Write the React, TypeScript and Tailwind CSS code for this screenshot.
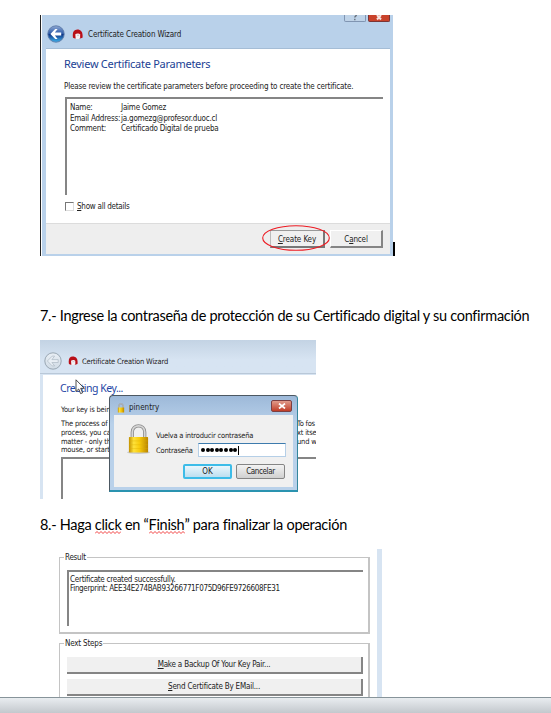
import React from "react";

const ui = "font-['DejaVu_Sans_Condensed','Noto_Sans',sans-serif] whitespace-nowrap text-[#222]";
const body = "font-['Lato','Noto_Sans',sans-serif] whitespace-nowrap text-black";

function RedCap({ className }: { className: string }) {
  return (
    <svg viewBox="0 0 11 10" className={className}>
      <path d="M1 8.800C.1 3.500 1.500.6 5.300.5c4 0 5.800 3 5.200 8.300l-2.500.8H3z" fill="#b90f18" />
      <path d="M3.300 5.300c1.300-1.200 4-1 4.800.200v3.600l-1 .9H3.700z" fill="#f3f1f5" />
      <path d="M5 6.300h2" stroke="#b9a0a8" strokeWidth=".6" />
    </svg>
  );
}

function BackIcon({ active }: { active: boolean }) {
  return (
    <svg viewBox="0 0 18 18" className="h-[18px] w-[18px] shrink-0">
      <defs>
        <linearGradient id="backOn" x1="0" y1="0" x2="0" y2="1">
          <stop offset="0" stopColor="#8fa9d3" />
          <stop offset=".48" stopColor="#2c5aa8" />
          <stop offset=".52" stopColor="#0f3585" />
          <stop offset="1" stopColor="#3fb4ee" />
        </linearGradient>
        <linearGradient id="backOff" x1="0" y1="0" x2="0" y2="1">
          <stop offset="0" stopColor="#e9eff5" />
          <stop offset="1" stopColor="#d0dbe5" />
        </linearGradient>
      </defs>
      <circle cx="9" cy="9" r="8.200" fill={active ? "url(#backOn)" : "url(#backOff)"} stroke={active ? "#5b79a8" : "#929fac"} strokeWidth=".9" />
      <path
        d="M3.400 9l4.800-4.900h2.400L7.900 7.600h6.300v2.900H7.900l2.700 3.400H8.200z"
        fill={active ? "#fff" : "#e9eff5"}
        stroke={active ? "none" : "#a4b0bc"}
        strokeWidth=".6"
      />
    </svg>
  );
}

function Padlock({ className }: { className: string }) {
  return (
    <svg viewBox="0 0 24 32" className={className}>
      <defs>
        <linearGradient id="brass" x1="0" x2="1">
          <stop offset="0" stopColor="#c18f00" />
          <stop offset=".25" stopColor="#ffe23a" />
          <stop offset=".55" stopColor="#f8cb0c" />
          <stop offset="1" stopColor="#b98400" />
        </linearGradient>
      </defs>
      <ellipse cx="12" cy="30" rx="12" ry="1.600" fill="#c9c9c9" />
      <path d="M5.500 15V9c0-9 13-9 13 0v6" fill="none" stroke="#8c8c8c" strokeWidth="3.400" />
      <path d="M5.500 15V9c0-9 13-9 13 0v6" fill="none" stroke="#d6d6d6" strokeWidth="1.700" />
      <rect x="2" y="14" width="20" height="16" rx=".6" fill="url(#brass)" />
      <path d="M2 18h20M2 22h20M2 26h20" stroke="#e0b000" strokeWidth=".4" />
    </svg>
  );
}

function Squiggle({ width }: { width: number }) {
  let d = "M0 2.5";
  for (let x = 2; x <= width; x += 2) d += `L${x} ${x % 4 ? 0.5 : 2.5}`;
  return (
    <svg width={width} height="3" className="absolute left-0 top-[16px]">
      <path d={d} fill="none" stroke="#f03030" strokeWidth=".9" />
    </svg>
  );
}

function ReviewWindow() {
  return (
    <section className={`${ui} relative ml-10 flex h-[241px] w-[353px] border-l border-[#222] pl-px text-[8px] leading-[11px]`}>
      <div className="flex w-full flex-col bg-[#b9d1ea] pb-[2px] pl-[4px] pr-[3px]">
        <header className="flex h-[33px] justify-between">
          <div className="flex items-center pl-px pt-[4px]">
            <BackIcon active />
            <RedCap className="ml-[7px] h-[10px] w-[11px]" />
            <span className="ml-[5px] mt-[2px] tracking-[-0.14px]">Certificate Creation Wizard</span>
          </div>
          <div className="flex gap-[2px]">
            <span className="flex h-[7px] w-[22px] justify-center rounded-b-[2px] border border-t-0 border-[#8095b2] bg-[#bfd3e8]">
              <svg viewBox="0 0 6 6" className="h-[6px] w-[6px]"><path d="M4.300 0c0 1.300-1.500 1-1.500 2.500M2.800 3.800v1.400" fill="none" stroke="#66707c" strokeWidth="1.400" /></svg>
            </span>
            <span className="flex h-[7px] w-[22px] justify-center rounded-b-[2px] border border-t-0 border-[#7b3434] bg-[#c9422b]">
              <svg viewBox="0 0 10 6" className="h-[6px] w-[10px]"><path d="M3 0l4 4.500M7 0L3 4.500" fill="none" stroke="#f4e4e2" strokeWidth="2" /></svg>
            </span>
          </div>
        </header>
        <div className="flex h-[175px] flex-col border-t border-[#a5bdd6] bg-white pl-[18px] pr-[7px]">
          <h2 className="mt-[6px] font-['Noto_Sans',sans-serif] text-[11px] leading-[18px] tracking-[-0.27px] text-[#1c3f94]">Review Certificate Parameters</h2>
          <p className="mt-[8px] tracking-[-0.17px]">Please review the certificate parameters before proceeding to create the certificate.</p>
          <div className="ml-px mt-[5px] grid h-[98px] w-[318px] grid-cols-[51px_1fr] content-start border-l-2 border-t-2 border-[#858585] pl-[3px] pt-[4px] leading-[10.5px] tracking-[-0.22px]">
            <span>Name:</span><span>Jaime Gomez</span>
            <span>Email Address:</span><span>ja.gomezg@profesor.duoc.cl</span>
            <span>Comment:</span><span>Certificado Digital de prueba</span>
          </div>
          <label className="mt-[6px] flex items-center pl-px">
            <span className="h-[9px] w-[9px] border border-b-[#ddd] border-l-[#777] border-r-[#ddd] border-t-[#777] bg-white" />
            <span className="ml-[3px] tracking-[-0.25px]"><u>S</u>how all details</span>
          </label>
        </div>
        <footer className="flex flex-1 items-start justify-end gap-[5px] border-t border-[#dcdcdc] bg-[#eee] pr-[7px] pt-[6px]">
          <div className="relative">
            <button className="block h-[18px] w-[55px] border border-b-2 border-r-2 border-[#777] border-l-[#bbb] border-t-[#999] bg-[#f0f0f0] pt-px leading-[15px] tracking-[-0.1px]"><u>C</u>reate Key</button>
            <svg viewBox="0 0 68 26" className="absolute left-[-8px] top-[-5px] h-[26px] w-[68px] max-w-none">
              <ellipse cx="34" cy="13" rx="33.300" ry="12.300" fill="none" stroke="#ed1c24" strokeWidth="1.100" />
            </svg>
          </div>
          <button className="block h-[18px] w-[53px] border border-b-2 border-r-2 border-[#858585] border-l-white border-t-white bg-[#f0f0f0] pt-px leading-[15px] tracking-[-0.15px]">C<u>a</u>ncel</button>
        </footer>
      </div>
      <span className="absolute left-[352px] top-[227px] h-[14px] w-[2px] bg-black" />
    </section>
  );
}

function Pinentry() {
  return (
    <div className="absolute left-[69px] top-[55px] flex h-[97px] w-[189px] flex-col rounded-t-[4px] border border-b-2 border-[#4c5862] border-b-[#2a93b0] border-r-[#34869c] bg-linear-to-b from-[#9db9d9] to-[#b9d1ea] to-30% px-[4px] pb-[3px]">
      <header className="flex h-[19px] shrink-0 items-center pt-[4px]">
        <Padlock className="ml-[3px] h-[10px] w-[8px]" />
        <span className="ml-[4px] text-[8px]">pinentry</span>
        <span className="-mt-[3px] ml-auto mr-px flex h-[12px] w-[21px] items-center justify-center rounded-[2px] border border-[#7c3f42] bg-linear-to-b from-[#e09a8a] to-[#bf3b26]">
          <svg viewBox="0 0 8 6" className="h-[6px] w-[8px]"><path d="M1 .6l6 4.800M7 .6l-6 4.800" stroke="#fff" strokeWidth="1.800" /></svg>
        </span>
      </header>
      <div className="flex flex-1 flex-col bg-[#f0f0f0] pl-[13px]">
        <div className="flex h-[44px]">
          <Padlock className="mt-[8px] h-[32px] w-[23px] shrink-0" />
          <div className="pl-[6px] pt-[16px]">
            <p className="leading-[10px] tracking-[-0.2px]">Vuelva a introducir contraseña</p>
            <div className="mt-[2px] flex items-center">
              <span className="w-[42px] tracking-[-0.2px]">Contraseña</span>
              <span className="flex h-[14px] w-[88px] items-center border border-[#b5cfe7] border-t-[#3d7bad] bg-white pl-[2px]">
                {Array.from({ length: 8 }, (_, i) => (
                  <i key={i} className="mr-[0.6px] h-[4px] w-[4px] shrink-0 rounded-full bg-black" />
                ))}
                <i className="h-[9px] w-px bg-black" />
              </span>
            </div>
          </div>
        </div>
        <div className="mt-[5px] flex justify-end gap-[4px] pr-[8px]">
          <button className="h-[15px] w-[49px] rounded-[2px] border-2 border-[#3dbce8] bg-linear-to-b from-[#eaf6fc] to-[#bcdff0] text-[8px] leading-[11px]">OK</button>
          <button className="h-[15px] w-[49px] rounded-[2px] border border-[#858585] bg-linear-to-b from-[#f3f3f3] to-[#d0d0d0] text-[8px] leading-[13px] tracking-[-0.4px]">Cancelar</button>
        </div>
      </div>
    </div>
  );
}

function CreatingWindow() {
  return (
    <section className={`${ui} relative ml-10 flex h-[159px] w-[276px] flex-col overflow-hidden bg-[#d7e4f2] text-[7.500px] leading-[9px]`}>
      <header className="flex h-[34px] shrink-0 items-center border-b border-[#b9c8d8] bg-linear-to-b from-[#c3d3e4] to-[#d7e4f2] to-60% pl-[4px] pt-[8px]">
        <BackIcon active={false} />
        <RedCap className="ml-[6px] h-[9px] w-[10px]" />
        <span className="ml-[4px] mt-px tracking-[-0.18px]">Certificate Creation Wizard</span>
      </header>
      <div className="ml-[3px] mt-px flex-1 bg-white pl-[17px]">
        <h2 className="pt-[6px] font-['Noto_Sans',sans-serif] text-[10.500px] leading-[15px] tracking-[-0.5px] text-[#1f47a5]">Creating Key...</h2>
        <p className="mt-[9px] pl-px tracking-[-0.2px]">Your key is being</p>
        <div className="mt-[6px] flex justify-between pl-px leading-[8.800px] tracking-[-0.2px]">
          <p className="w-[49px] overflow-hidden">The process of<br />process, you can<br />matter - only the<br />mouse, or start</p>
          <p className="w-[19px] overflow-hidden">To fos<br />xt itse<br />und w</p>
        </div>
        <div className="ml-px mt-[2px] h-[50px] border-l-2 border-t-2 border-[#858585]" />
      </div>
      <Pinentry />
      <svg viewBox="0 0 10 16" className="absolute left-[35px] top-[39px] h-[16px] w-[10px]">
        <path d="M1 .8v11.700l2.700-2.500 1.900 4.600 2-.8-1.900-4.500h3.500z" fill="#fff" stroke="#222" strokeWidth=".8" />
      </svg>
    </section>
  );
}

function ResultWindow() {
  return (
    <section className={`${ui} ml-[59px] flex h-[148px] w-[323px] overflow-hidden border-r-[5px] border-[#d7e4f2] text-[8px] leading-[9px]`}>
      <div className="flex w-[311px] shrink-0 flex-col gap-[9px] pt-[8px]">
        <div className="h-[77px] shrink-0 border border-b-2 border-r-2 border-[#c4c4c4] pl-[4px]">
          <span className="-mt-[5px] block w-fit bg-white px-px leading-[10px] tracking-[-0.25px]">Result</span>
          <div className="ml-[3px] mt-[7px] h-[56px] w-[296px] border-l-2 border-t-2 border-[#858585] pl-px pt-[3px]">
            <p className="tracking-[-0.26px]">Certificate created successfully.</p>
            <p className="tracking-[-0.34px]">Fingerprint: AEE34E274BAB93266771F075D96FE9726608FE31</p>
          </div>
        </div>
        <div className="h-[77px] shrink-0 border border-r-2 border-[#c4c4c4] pl-[4px]">
          <span className="-mt-[5px] block w-fit bg-white px-px leading-[10px] tracking-[-0.2px]">Next Steps</span>
          <div className="ml-[3px] mt-[8px] flex w-[296px] flex-col gap-[5px] tracking-[-0.2px]">
            <button className="h-[17px] border-b-2 border-r-2 border-[#858585] bg-[#f0f0f0]"><u>M</u>ake a Backup Of Your Key Pair...</button>
            <button className="h-[17px] border-b-2 border-r-2 border-[#858585] bg-[#f0f0f0]"><u>S</u>end Certificate By EMail...</button>
          </div>
        </div>
      </div>
    </section>
  );
}

export default function App() {
  return (
    <main className="flex h-[713px] w-[551px] flex-col overflow-hidden bg-white pt-[15px]">
      <ReviewWindow />
      <p className={`${body} ml-10 mt-[50px] h-[34px] text-[14.500px] leading-[20px] tracking-[-0.3px]`}>
        7.- Ingrese la contraseña de protección de su Certificado digital y su confirmación
      </p>
      <CreatingWindow />
      <p className={`${body} ml-10 mt-[16px] h-[34px] text-[14.500px] leading-[20px] tracking-[-0.29px]`}>
        8.- Haga <span className="relative inline-block">click<Squiggle width={26} /></span> en “
        <span className="relative inline-block">Finish<Squiggle width={36} /></span>” para finalizar la operación
      </p>
      <ResultWindow />
      <footer className="h-[16px] shrink-0 border-t border-[#87949a] bg-linear-to-b from-[#e9edf0] to-[#c3c8cd]" />
    </main>
  );
}
